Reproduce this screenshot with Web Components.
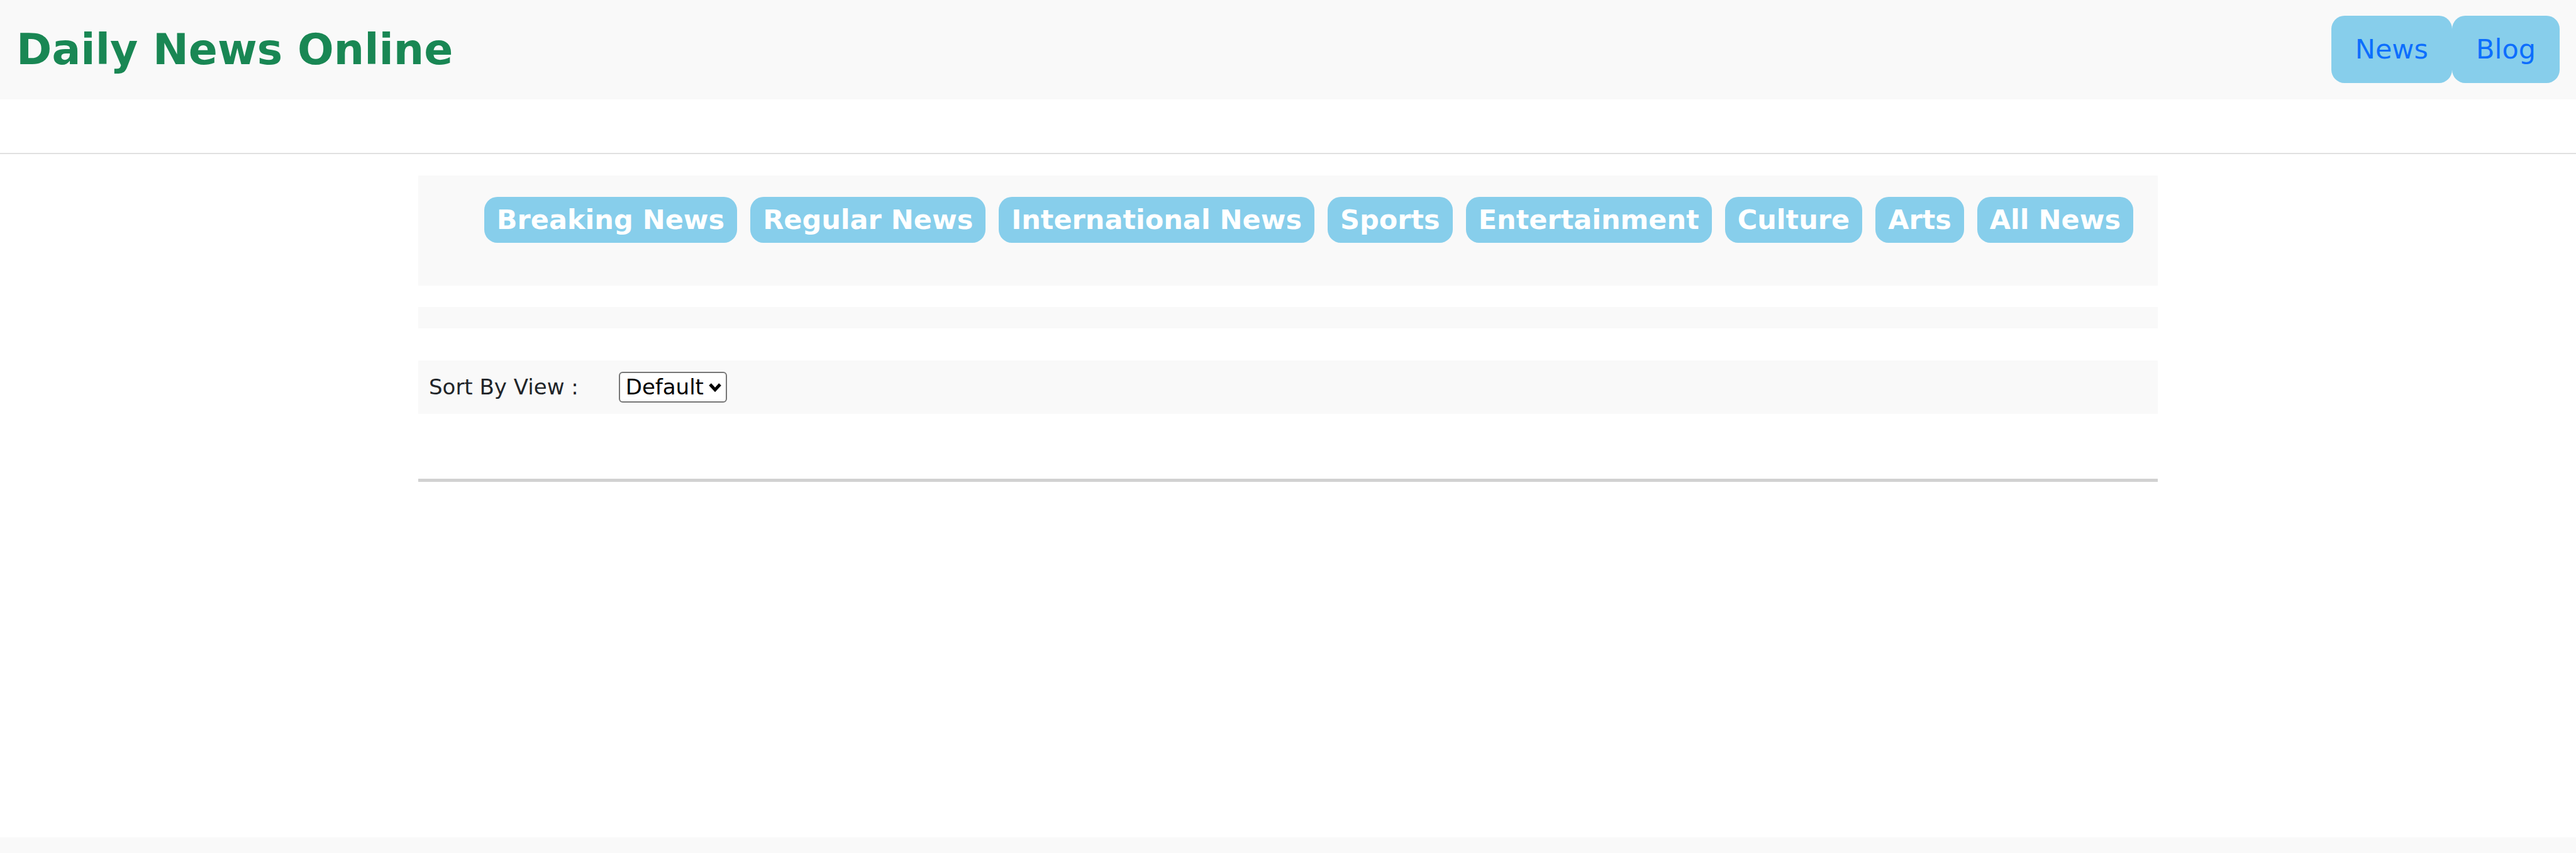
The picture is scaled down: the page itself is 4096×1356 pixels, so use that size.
<!DOCTYPE html>
<html lang="en">
<head>
<meta charset="utf-8">
<title>Daily News Online</title>
<style>
  body {
    margin: 0;
    background: #fff;
    color: #212529;
    font: 34px/51px "DejaVu Sans", sans-serif;
    --panel: #f9f9f9;
    --pill: #87ceeb;
  }
</style>
</head>
<body>
<news-page>
  <site-header slot="header" heading="Daily News Online">
    <nav-button href="#news">News</nav-button>
    <nav-button href="#blog">Blog</nav-button>
  </site-header>
  <category-bar>
    <category-pill>Breaking News</category-pill>
    <category-pill>Regular News</category-pill>
    <category-pill>International News</category-pill>
    <category-pill>Sports</category-pill>
    <category-pill>Entertainment</category-pill>
    <category-pill>Culture</category-pill>
    <category-pill>Arts</category-pill>
    <category-pill>All News</category-pill>
  </category-bar>
  <result-bar></result-bar>
  <sort-bar></sort-bar>
  <section-rule></section-rule>
</news-page>
<script>
const define = (name, markup, setup) => {
  customElements.define(name, class extends HTMLElement {
    constructor() {
      super();
      this.attachShadow({ mode: "open" }).innerHTML = markup;
    }
    connectedCallback() {
      if (setup) setup(this, this.shadowRoot);
    }
  });
};

define("nav-button", `
  <style>
    :host { display: block; }
    a {
      display: block;
      padding: 21px 38px;
      border-radius: 21px;
      background: var(--pill);
      color: #0d6efd;
      font-size: 43px;
      line-height: 65px;
      text-decoration: none;
    }
  </style>
  <a><slot></slot></a>`,
  (host, root) => root.querySelector("a").setAttribute("href", host.getAttribute("href")));

define("site-header", `
  <style>
    :host { display: block; border-bottom: 2px solid #e0e0e0; padding-bottom: 85px; }
    header {
      display: flex;
      align-items: center;
      justify-content: space-between;
      padding: 25px 26px 26px;
      background: var(--panel);
    }
    h1 { margin: 0; color: #198754; font-size: 68px; line-height: 82px; font-weight: 700; }
    nav { display: flex; }
  </style>
  <header><h1></h1><nav><slot></slot></nav></header>`,
  (host, root) => { root.querySelector("h1").textContent = host.getAttribute("heading"); });

define("category-pill", `
  <style>
    :host { display: block; }
    button {
      display: block;
      margin: 0;
      padding: 4px 20px;
      border: 0;
      border-radius: 21px;
      background: var(--pill);
      color: #fff;
      font: 700 43px/65px "DejaVu Sans", sans-serif;
      white-space: nowrap;
      cursor: pointer;
    }
  </style>
  <button type="button"><slot></slot></button>`);

define("category-bar", `
  <style>
    :host { display: block; padding: 34px 39px 68px; background: var(--panel); }
    nav { display: flex; flex-wrap: wrap; justify-content: flex-end; gap: 21px; }
  </style>
  <nav aria-label="Categories"><slot></slot></nav>`);

define("result-bar", `
  <style>:host { display: block; margin-top: 34px; padding: 17px; background: var(--panel); }</style>`);

define("sort-bar", `
  <style>
    :host {
      display: flex;
      align-items: center;
      gap: 64px;
      margin-top: 51px;
      padding: 17px;
      background: var(--panel);
    }
    .field { display: grid; align-items: center; }
    select, svg { grid-area: 1 / 1; }
    select {
      appearance: none;
      margin: 0;
      padding: 2px 34px 3px 9px;
      border: 2px solid #767676;
      border-radius: 6px;
      background: #fff;
      color: #000;
      font: 34px/40px "DejaVu Sans", sans-serif;
    }
    svg { justify-self: end; width: 20px; height: 14px; margin-right: 9px; pointer-events: none; }
  </style>
  <label for="view">Sort By View :</label>
  <div class="field">
    <select id="view"><option>Default</option></select>
    <svg viewBox="0 0 20 14" aria-hidden="true"><path d="M2 2l8 8.6L18 2" fill="none" stroke="#000" stroke-width="5"/></svg>
  </div>`);

define("section-rule", `
  <style>
    :host { display: block; margin-top: 103px; }
    hr { margin: 0; border: 0; height: 5px; background: #d1d1d1; }
  </style>
  <hr>`);

define("news-page", `
  <style>
    :host { display: flex; flex-direction: column; min-height: 100vh; }
    main { flex: 1; box-sizing: border-box; width: 100%; max-width: 2766px; margin: 0 auto; padding-top: 34px; }
    footer { padding-top: 25px; background: var(--panel); }
  </style>
  <slot name="header"></slot>
  <main><slot></slot></main>
  <footer></footer>`);
</script>
</body>
</html>
